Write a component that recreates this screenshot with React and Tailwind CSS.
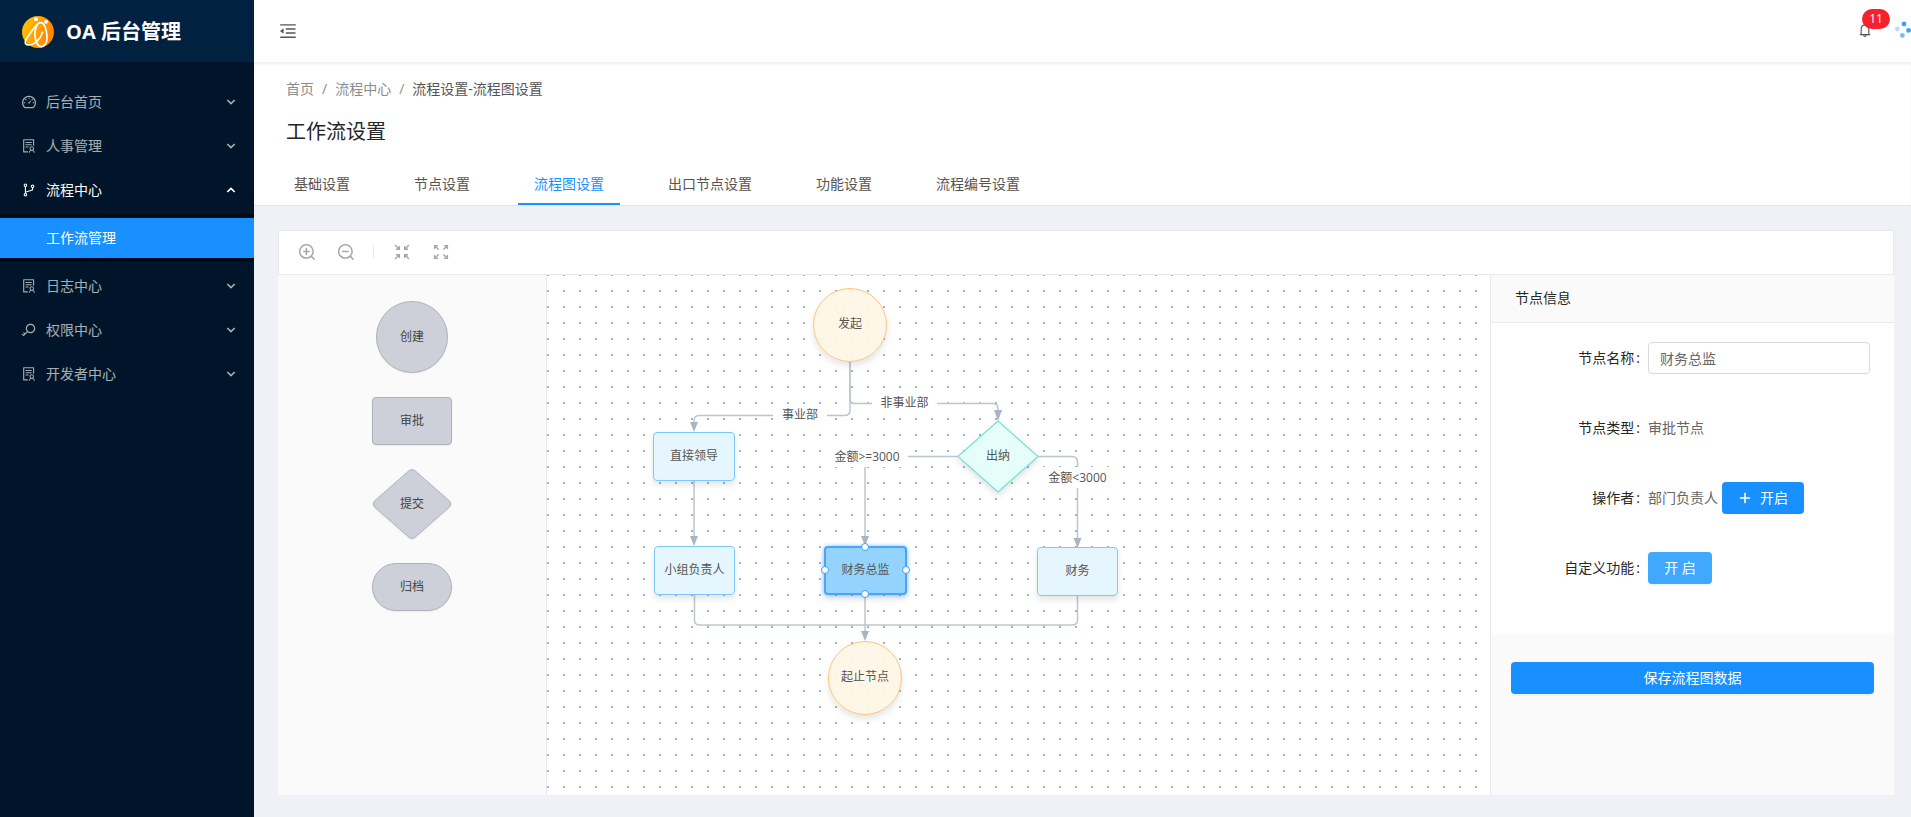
import React from 'react';
import {
  AiOutlineBell,
  AiOutlineBranches,
  AiOutlineDashboard,
  AiOutlineKey,
  AiOutlineMenuFold,
  AiOutlinePlus,
  AiOutlineSolution,
  AiOutlineZoomIn,
  AiOutlineZoomOut,
} from 'react-icons/ai';

const menu = [
  { label: '后台首页', icon: AiOutlineDashboard },
  { label: '人事管理', icon: AiOutlineSolution },
  { label: '流程中心', icon: AiOutlineBranches, children: ['工作流管理'] },
  { label: '日志中心', icon: AiOutlineSolution },
  { label: '权限中心', icon: AiOutlineKey },
  { label: '开发者中心', icon: AiOutlineSolution },
];

const tabs = ['基础设置', '节点设置', '流程图设置', '出口节点设置', '功能设置', '流程编号设置'];

function Logo() {
  return (
    <svg viewBox="0 0 96 96" className="size-8 shrink-0" aria-hidden="true">
      <defs>
        <linearGradient id="logo" x1="0" y1="0" x2="1" y2="0.3">
          <stop offset="0" stopColor="#ffc800" />
          <stop offset="1" stopColor="#ff8400" />
        </linearGradient>
      </defs>
      <circle cx="48" cy="48" r="48" fill="url(#logo)" />
      <g fill="none" stroke="#fff" strokeWidth="5" strokeLinecap="round">
        <path d="M56 20C44 20 38 40 39 58c1 20 9 34 19 34s18-12 17-30c-1-20-7-42-19-42Z" />
        <path d="M46 26C34 36 26 50 15 66c-8 11-7 20 3 21 16 1 36-14 44-38" />
      </g>
      <circle cx="42" cy="10" r="6" fill="#fff" />
      <circle cx="72" cy="17" r="6" fill="#fff" />
    </svg>
  );
}

function Arrow({ up }) {
  return (
    <svg viewBox="0 0 10 6" className="h-1.5 w-2.5" fill="none" stroke="currentColor" strokeWidth="1.7" aria-hidden="true">
      <path d={up ? 'M1.3 5 5 1.4 8.7 5' : 'M1.3 1 5 4.6 8.7 1'} />
    </svg>
  );
}

function Sidebar() {
  return (
    <aside className="w-[254px] shrink-0 bg-[#001529]">
      <div className="flex h-[62px] items-center gap-3 bg-[#002140] pt-0.5 pl-[22px]">
        <Logo />
        <h1 className="text-xl font-bold text-white">OA 后台管理</h1>
      </div>
      <nav className="flex flex-col gap-1 pt-5">
        {menu.map(({ label, icon: Icon, children }) => (
          <React.Fragment key={label}>
            <button
              type="button"
              className={
                children
                  ? 'flex h-10 items-center gap-[9px] pr-[18px] pl-[21px] text-sm text-white'
                  : 'flex h-10 items-center gap-[9px] pr-[18px] pl-[21px] text-sm text-white/65'
              }
            >
              <Icon className="size-4" />
              <span className="flex-1 text-left">{label}</span>
              <Arrow up={!!children} />
            </button>
            {children && (
              <div className="bg-[#000c17] py-1">
                {children.map((c) => (
                  <a key={c} href="#workflow" className="flex h-10 items-center bg-[#1890ff] pl-[46px] text-sm text-white">
                    {c}
                  </a>
                ))}
              </div>
            )}
          </React.Fragment>
        ))}
      </nav>
    </aside>
  );
}

function TopBar() {
  return (
    <header className="relative z-10 flex h-[62px] items-center justify-between overflow-hidden bg-white pl-6 text-[#555]">
      <button type="button" aria-label="收起菜单">
        <AiOutlineMenuFold className="size-5" />
      </button>
      <div className="flex items-center pb-0.5">
        <button type="button" aria-label="通知" className="relative mr-[21px]">
          <AiOutlineBell className="size-4" />
          <span className="absolute -top-[13px] left-[5px] flex h-5 w-7 items-center justify-center rounded-full bg-[#f5222d] text-xs text-white">
            11
          </span>
        </button>
        <svg viewBox="0 0 17 20" className="h-5 w-[17px]" fill="#1890ff" aria-hidden="true">
          <circle cx="10" cy="4" r="2.4" opacity="0.85" />
          <circle cx="3.4" cy="9" r="2.4" opacity="0.3" />
          <circle cx="14.6" cy="10.4" r="2.4" opacity="0.85" />
          <circle cx="8.4" cy="15.4" r="2.4" opacity="0.6" />
        </svg>
      </div>
    </header>
  );
}

function PageHead() {
  return (
    <div className="border-b border-[#e4e6ea] bg-white px-6 pt-4 shadow-[inset_0_3px_4px_-2px_rgba(0,21,41,0.1)]">
      <nav aria-label="面包屑" className="flex gap-2 px-2 text-sm leading-[22px] text-[#8c8c8c]">
        <a href="#home">首页</a>
        <span>/</span>
        <a href="#center">流程中心</a>
        <span>/</span>
        <span className="text-[#555]">流程设置-流程图设置</span>
      </nav>
      <h2 className="mt-4 px-2 text-xl leading-8 text-[#262626]">工作流设置</h2>
      <div role="tablist" className="mt-4 flex gap-8">
        {tabs.map((t) => (
          <button
            key={t}
            type="button"
            role="tab"
            aria-selected={t === '流程图设置'}
            className={
              t === '流程图设置'
                ? 'h-[41px] border-b-2 border-[#1890ff] px-4 text-sm text-[#1890ff]'
                : 'h-[41px] border-b-2 border-transparent px-4 text-sm text-[#555]'
            }
          >
            {t}
          </button>
        ))}
      </div>
    </div>
  );
}

function CompressIcon() {
  return (
    <svg viewBox="0 0 16 16" className="size-4" fill="none" stroke="currentColor" strokeWidth="1.4" aria-hidden="true">
      <path d="M1 1l4 4M15 1l-4 4M1 15l4-4M15 15l-4-4M5.300 2V5.300H2M10.700 2V5.300H14M5.300 14V10.700H2M10.700 14V10.700H14" />
    </svg>
  );
}

function ExpandIcon() {
  return (
    <svg viewBox="0 0 16 16" className="size-4" fill="none" stroke="currentColor" strokeWidth="1.4" aria-hidden="true">
      <path d="M1.6 1.6l4 4M14.4 1.6l-4 4M1.6 14.4l4-4M14.4 14.4l-4-4M1.6 5V1.6H5M14.4 5V1.6H11M1.6 11v3.4H5M14.4 11v3.4H11" />
    </svg>
  );
}

function Toolbar() {
  return (
    <div className="flex h-[45px] items-center border border-[#e6e9ed] bg-white pr-5 pb-0.5 pl-[18px] text-[#a6a6a6]">
      <div className="flex items-center gap-[19px]">
        <button type="button" aria-label="放大"><AiOutlineZoomIn className="size-5" /></button>
        <button type="button" aria-label="缩小"><AiOutlineZoomOut className="size-5" /></button>
      </div>
      <span className="mr-5 ml-[17px] h-[13px] w-px bg-[#e6e9ed]" />
      <div className="flex items-center gap-[23px]">
        <button type="button" aria-label="适应画布"><CompressIcon /></button>
        <button type="button" aria-label="实际尺寸"><ExpandIcon /></button>
      </div>
    </div>
  );
}

function Palette() {
  return (
    <div className="flex w-[269px] shrink-0 flex-col items-center gap-6 border-r border-[#e6e9ed] bg-[#fafafa] pt-[26px] text-xs text-[#444]">
      <div className="flex size-[72px] items-center justify-center rounded-full border border-[#aeb1ba] bg-[#cdd0d8] shadow-xs">创建</div>
      <div className="flex h-12 w-20 items-center justify-center rounded border border-[#aeb1ba] bg-[#cdd0d8] shadow-xs">审批</div>
      <div className="relative flex h-[70px] w-20 items-center justify-center">
        <svg viewBox="0 0 80 72" preserveAspectRatio="none" className="absolute inset-0 size-full drop-shadow-xs" aria-hidden="true">
          <path
            d="M37 1.7Q40-.8 43 1.7L77.600 33Q80 36 77.600 39L43 70.300Q40 72.800 37 70.300L2.400 39Q0 36 2.400 33Z"
            fill="#cdd0d8"
            stroke="#aeb1ba"
          />
        </svg>
        <span className="relative">提交</span>
      </div>
      <div className="flex h-12 w-20 items-center justify-center rounded-full border border-[#aeb1ba] bg-[#cdd0d8] shadow-xs">归档</div>
    </div>
  );
}

const nodeText = 'absolute flex items-center justify-center text-xs text-[#555]';

function Canvas() {
  return (
    <div className="relative min-w-0 flex-1 overflow-hidden bg-white">
      <svg className="absolute inset-0 size-full" aria-hidden="true">
        <defs>
          <pattern id="dots" width="16" height="16" y="-1" patternUnits="userSpaceOnUse">
            <rect width="2" height="2" fill="#a3b1bf" />
          </pattern>
        </defs>
        <rect width="100%" height="100%" fill="url(#dots)" />
        <g fill="none" stroke="#bcc6d1" strokeWidth="1.5">
          <path d="M303 87V135Q303 140.500 298 140.500H152Q147 140.500 147 146V148" />
          <path d="M303 87V124Q303 128.500 308 128.500H446Q451 128.500 451 134V137" />
          <path d="M147 206V262" />
          <path d="M411 181.500H318V262" />
          <path d="M491 181.500H525Q530.500 181.500 530.500 187V264" />
          <path d="M147.500 320V345Q147.500 350 153 350H525Q530.500 350 530.500 345V321" />
          <path d="M318 320V357" />
        </g>
        <g fill="#a9b5c3">
          <path d="M143 147h8l-4 10zM447 135h8l-4 11zM143 261h8l-4 10zM314 261h8l-4 10zM526.500 263h8l-4 10zM314 356h8l-4 10z" />
        </g>
      </svg>

      <span className={`${nodeText} top-[130px] left-[226px] h-5 w-[54px] bg-white`}>事业部</span>
      <span className={`${nodeText} top-[118px] left-[325px] h-5 w-[65px] bg-white`}>非事业部</span>
      <span className={`${nodeText} top-[171px] left-[279px] h-[21px] w-[82px] bg-white`}>金额&gt;=3000</span>
      <span className={`${nodeText} top-[192px] left-[493px] h-[21px] w-[75px] bg-white`}>金额&lt;3000</span>

      <div className={`${nodeText} top-[13px] left-[266px] size-[74px] rounded-full border border-[#fbc57c] bg-[#fef5e6]/95 pb-0.5 shadow-[0_4px_6px_rgba(0,0,0,0.1)]`}>发起</div>
      <div className={`${nodeText} top-[157px] left-[106px] h-[49px] w-[82px] rounded border border-[#7cc8fd] bg-[#e5f6fe]/95 pb-0.5 shadow-[0_4px_6px_rgba(0,0,0,0.1)]`}>直接领导</div>
      <div className={`${nodeText} top-[271px] left-[107px] h-[49px] w-[81px] rounded border border-[#7cc8fd] bg-[#e5f6fe]/95 pb-0.5 shadow-[0_4px_6px_rgba(0,0,0,0.1)]`}>小组负责人</div>
      <div className={`${nodeText} top-[271px] left-[277px] h-[49px] w-[83px] rounded border-2 border-[#45a6fb] bg-[#93d3fd] pb-0.5 shadow-[0_0_4px_rgba(24,144,255,0.5),0_4px_6px_rgba(0,0,0,0.12)]`}>
        财务总监
        <i className="absolute -top-[5px] left-[35px] size-2 rounded-full border border-[#3a9ffb] bg-white" />
        <i className="absolute -bottom-[5px] left-[35px] size-2 rounded-full border border-[#3a9ffb] bg-white" />
        <i className="absolute top-[18px] -left-[5px] size-2 rounded-full border border-[#3a9ffb] bg-white" />
        <i className="absolute top-[18px] -right-[5px] size-2 rounded-full border border-[#3a9ffb] bg-white" />
      </div>
      <div className={`${nodeText} top-[272px] left-[490px] h-[49px] w-[81px] rounded border border-[#7cc8fd] bg-[#e5f6fe]/95 pb-0.5 shadow-[0_4px_6px_rgba(0,0,0,0.1)]`}>财务</div>
      <div className={`${nodeText} top-[145px] left-[410px] h-[73px] w-[82px] pb-0.5`}>
        <svg viewBox="0 0 82 73" className="absolute inset-0 size-full drop-shadow-md" aria-hidden="true">
          <path d="M41 1 81 36.500 41 72 1 36.500Z" fill="#e6fefa" stroke="#7fe0d8" strokeWidth="1.300" strokeLinejoin="round" />
        </svg>
        <span className="relative">出纳</span>
      </div>
      <div className={`${nodeText} top-[366px] left-[281px] size-[74px] rounded-full border border-[#fbc57c] bg-[#fef5e6]/95 pb-0.5 shadow-[0_4px_6px_rgba(0,0,0,0.1)]`}>起止节点</div>
    </div>
  );
}

function FormRow({ label, htmlFor, children }) {
  return (
    <div className="flex h-8 items-center">
      <label htmlFor={htmlFor} className="w-[133px] pr-2 text-right text-[#262626]">
        {label}
        <span className="ml-0.5">:</span>
      </label>
      <div className="flex min-w-0 flex-1 items-center gap-1 text-[#666]">{children}</div>
    </div>
  );
}

function NodePanel() {
  return (
    <section className="w-[404px] shrink-0 border-l border-[#e6e9ed] bg-[#fafafa] text-sm">
      <h3 className="flex h-12 items-center border-b border-[#e6e9ed] px-6 pb-0.5 text-[#262626]">节点信息</h3>
      <form className="flex flex-col gap-[38px] bg-white px-6 pt-[19px] pb-[50px]">
        <FormRow label="节点名称" htmlFor="node-name">
          <input
            id="node-name"
            type="text"
            defaultValue="财务总监"
            className="h-8 w-full rounded border border-[#d9d9d9] bg-white px-[11px] text-[#666] outline-none"
          />
        </FormRow>
        <FormRow label="节点类型" htmlFor="node-type">
          <output id="node-type">审批节点</output>
        </FormRow>
        <FormRow label="操作者" htmlFor="node-operator">
          <span>部门负责人</span>
          <button id="node-operator" type="button" className="flex h-8 items-center gap-2 rounded bg-[#1890ff] px-4 text-white">
            <AiOutlinePlus className="size-3.5" strokeWidth="40" />
            开启
          </button>
        </FormRow>
        <FormRow label="自定义功能" htmlFor="node-custom">
          <button id="node-custom" type="button" className="h-8 w-16 rounded bg-[#40a9ff] text-white shadow-[0_2px_0_rgba(0,0,0,0.045)]">
            开 启
          </button>
        </FormRow>
      </form>
      <div className="px-5 pt-7">
        <button type="button" className="h-8 w-full rounded bg-[#1890ff] text-white shadow-[0_2px_0_rgba(0,0,0,0.045)]">
          保存流程图数据
        </button>
      </div>
    </section>
  );
}

export default function App() {
  return (
    <div className="flex min-h-screen bg-[#f0f1f6] font-['Open_Sans','Noto_Sans_CJK_SC',sans-serif]">
      <Sidebar />
      <div className="flex min-w-0 flex-1 flex-col">
        <TopBar />
        <PageHead />
        <main className="flex flex-1 flex-col pt-6 pr-[17px] pb-[22px] pl-6">
          <Toolbar />
          <div className="flex flex-1">
            <Palette />
            <Canvas />
            <NodePanel />
          </div>
        </main>
      </div>
    </div>
  );
}
